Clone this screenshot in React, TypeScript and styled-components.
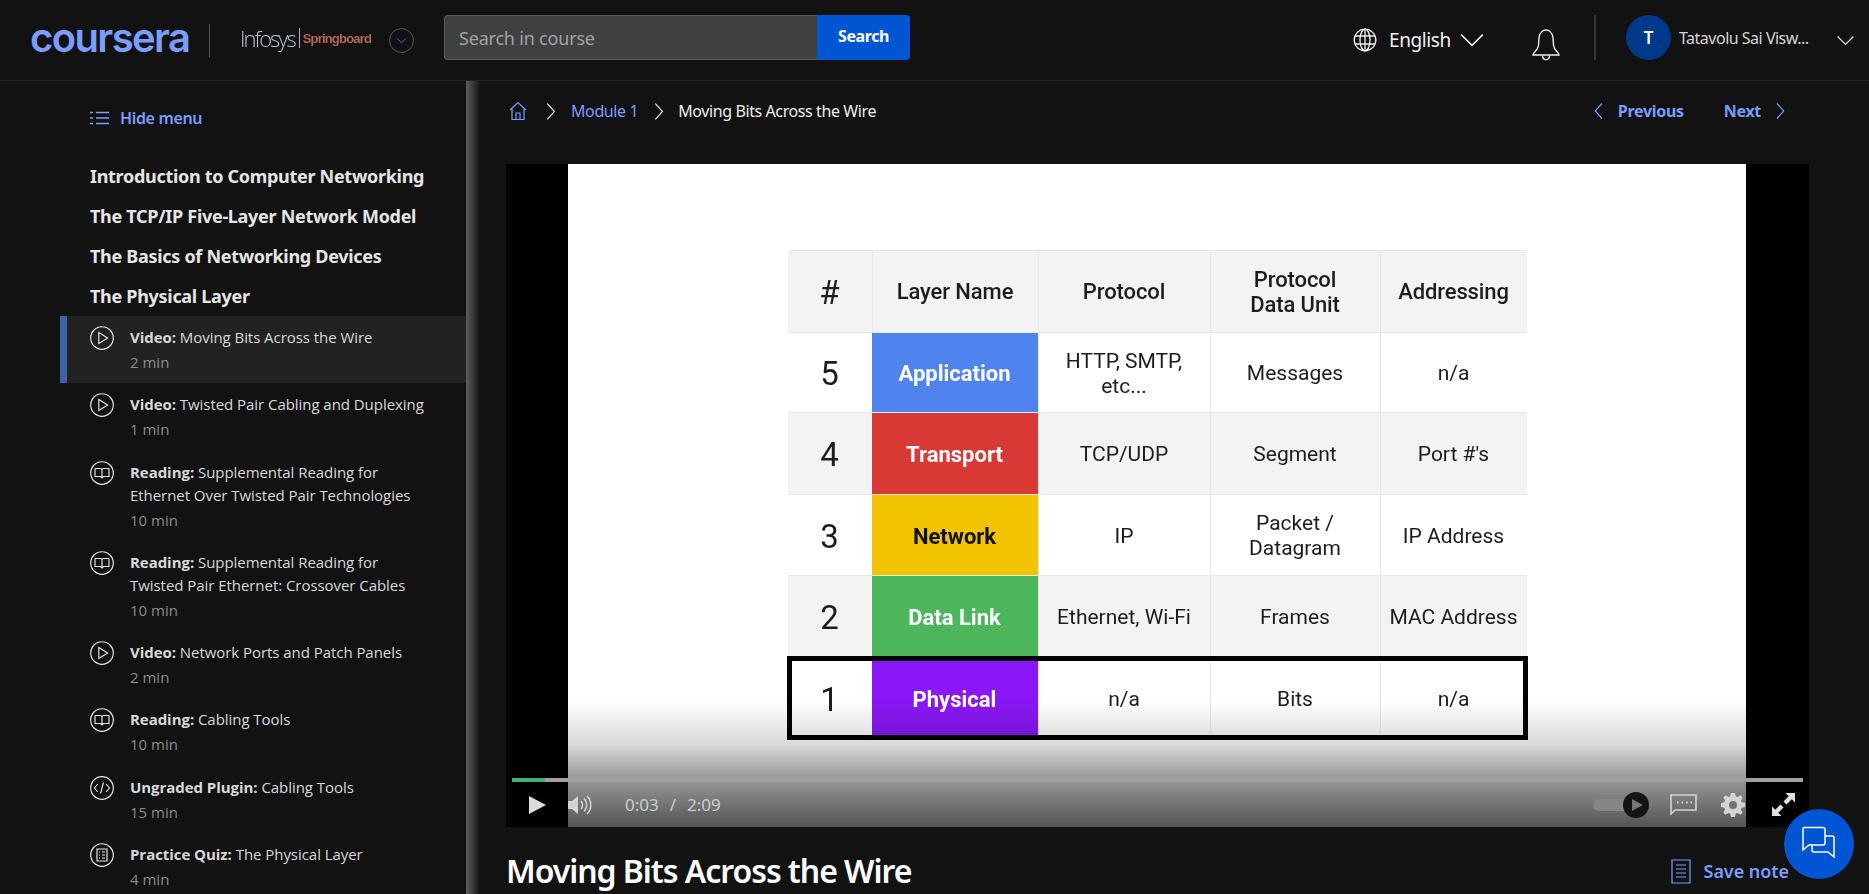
import styled, { createGlobalStyle } from "styled-components";

const GlobalStyle = createGlobalStyle`
    html, body {
        margin: 0;
        height: 100%;
        overflow: hidden;
        background: #121212;
        font-family: "Noto Sans", "Open Sans", sans-serif;
    }
    * {
        box-sizing: border-box;
    }
`

const BLUE = '#7b9dff'

const Chevron = ({dir = 'down', size = 22, color = '#e6e6e6'}: { dir?: string, size?: number, color?: string }) => {
    const paths: Record<string, string> = {
        down: 'M2 7 L12 17 L22 7',
        left: 'M16 2 L7 12 L16 22',
        right: 'M8 2 L17 12 L8 22',
    }
    return (
        <svg width={size} height={size} viewBox="0 0 24 24" fill="none" stroke={color} strokeWidth="1.5">
            <path d={paths[dir]}/>
        </svg>
    )
}

const Globe = () => (
    <svg width="24" height="24" viewBox="0 0 24 24" fill="none" stroke="#eee" strokeWidth="1.3">
        <circle cx="12" cy="12" r="10.8"/>
        <ellipse cx="12" cy="12" rx="5" ry="10.8"/>
        <path d="M12 1.2 V22.8 M1.6 8 H22.4 M1.6 16 H22.4"/>
    </svg>
)

const Bell = () => (
    <svg width="30" height="34" viewBox="0 0 30 34" fill="none" stroke="#eee" strokeWidth="1.4">
        <path d="M2 27 C2 24 7 23 7.5 17 L8 10 C8.5 5 11.5 2 15 2 C18.5 2 21.5 5 22 10 L22.5 17 C23 23 28 24 28 27 Z"/>
        <path d="M11.5 27.5 C11.5 33 18.5 33 18.5 27.5"/>
    </svg>
)

const Home = () => (
    <svg width="18" height="20" viewBox="0 0 18 20" fill="none" stroke={BLUE} strokeWidth="1.2">
        <path d="M1 9 L9 1.5 L17 9 M3 8 V18.5 H15 V8 M7 18.5 V12 H11 V18.5"/>
    </svg>
)

const ListIcon = () => (
    <svg width="20" height="14" viewBox="0 0 20 14" fill="none" stroke={BLUE} strokeWidth="1.6">
        <path d="M0 1.5 H3 M6 1.5 H19 M0 7 H3 M6 7 H19 M0 12.5 H3 M6 12.5 H19"/>
    </svg>
)

const ItemIcon = ({kind}: { kind: string }) => (
    <svg width="24" height="24" viewBox="0 0 24 24" fill="none" stroke="#e8e8e8" strokeWidth="1.15">
        <circle cx="12" cy="12" r="11.3"/>
        {kind === 'video' && <path d="M8.8 6.6 L17.6 12 L8.8 17.4 Z"/>}
        {kind === 'reading' && <path d="M5 7.5 H10.5 C11.3 7.5 12 8 12 9 V16.5 M19 7.5 H13.5 C12.7 7.5 12 8 12 9 M5 7.5 V15.5 H10.5 L12 17 L13.5 15.5 H19 V7.5"/>}
        {kind === 'plugin' && <path d="M7.8 8 L4.5 12 L7.8 16 M16.2 8 L19.5 12 L16.2 16 M13.4 6.5 L10.6 17.5"/>}
        {kind === 'quiz' && <path d="M7 6 H17 V18 H7 Z M9 9 H10 M12 9 H15 M9 12 H10 M12 12 H15 M9 15 H10 M12 15 H15"/>}
    </svg>
)

const Speaker = () => (
    <svg width="26" height="22" viewBox="0 0 26 22" fill="none" stroke="#d4d4d4" strokeWidth="1.5">
        <path d="M0 7 H4 L10 2 V20 L4 15 H0 Z" fill="#d4d4d4" stroke="none"/>
        <path d="M13 7 C15 9 15 13 13 15 M16 4.5 C19.5 8 19.5 14 16 17.5 M19 2 C24 7 24 15 19 20"/>
    </svg>
)

const Captions = () => (
    <svg width="27" height="21" viewBox="0 0 27 21" fill="none" stroke="#d4d4d4" strokeWidth="1.6">
        <path d="M1 1 H26 V16 H5 L1 20 Z"/>
        <path d="M7 8.5 H8.6 M11.5 8.5 H13.1 M16 8.5 H17.6 M20.5 8.5 H22" strokeWidth="2"/>
    </svg>
)

const Gear = () => (
    <svg width="24" height="24" viewBox="0 0 24 24">
        <path fill="#d4d4d4" fillRule="evenodd"
              d="M10 0 H14 L14.7 3.3 L16.6 4.1 L19.5 2.3 L21.7 4.5 L19.9 7.4 L20.7 9.3 L24 10 V14 L20.7 14.7 L19.9 16.6 L21.7 19.5 L19.5 21.7 L16.6 19.9 L14.7 20.7 L14 24 H10 L9.3 20.7 L7.4 19.9 L4.5 21.7 L2.3 19.5 L4.1 16.6 L3.3 14.7 L0 14 V10 L3.3 9.3 L4.1 7.4 L2.3 4.5 L4.5 2.3 L7.4 4.1 L9.3 3.3 Z M12 8 A4 4 0 1 0 12 16 A4 4 0 1 0 12 8 Z"/>
    </svg>
)

const Expand = () => (
    <svg width="23" height="23" viewBox="0 0 23 23" fill="#e0e0e0">
        <path d="M13.5 0 H23 V9.5 L19.8 6.3 L14.5 11.5 L11.5 8.5 L16.7 3.2 Z"/>
        <path d="M9.5 23 H0 V13.5 L3.2 16.7 L8.5 11.5 L11.5 14.5 L6.3 19.8 Z"/>
    </svg>
)

const Note = () => (
    <svg width="20" height="25" viewBox="0 0 20 25" fill="none" stroke={BLUE} strokeWidth="1.2">
        <path d="M1 1 H19 V24 H1 Z M5 6 H15 M5 10 H15 M5 14 H15 M5 18 H15"/>
    </svg>
)

const ChatIcon = () => (
    <svg width="36" height="36" viewBox="0 0 36 36" fill="none" stroke="#fff" strokeWidth="1.5">
        <path d="M3 1.5 H22 Q24 1.5 24 3.5 V17 Q24 19 22 19 H8 L2 24 V3 Q2 1.5 3 1.5 Z" fill="#0056d2"/>
        <path d="M11 19 V24 Q11 26 13 26 H27 L33 31 V12 Q33 10 31 10 H24" />
    </svg>
)

const sections = [
    'Introduction to Computer Networking',
    'The TCP/IP Five-Layer Network Model',
    'The Basics of Networking Devices',
    'The Physical Layer',
]

const items = [
    {kind: 'video', label: 'Video:', title: 'Moving Bits Across the Wire', time: '2 min', active: true},
    {kind: 'video', label: 'Video:', title: 'Twisted Pair Cabling and Duplexing', time: '1 min'},
    {kind: 'reading', label: 'Reading:', title: 'Supplemental Reading for Ethernet Over Twisted Pair Technologies', time: '10 min'},
    {kind: 'reading', label: 'Reading:', title: 'Supplemental Reading for Twisted Pair Ethernet: Crossover Cables', time: '10 min'},
    {kind: 'video', label: 'Video:', title: 'Network Ports and Patch Panels', time: '2 min'},
    {kind: 'reading', label: 'Reading:', title: 'Cabling Tools', time: '10 min'},
    {kind: 'plugin', label: 'Ungraded Plugin:', title: 'Cabling Tools', time: '15 min'},
    {kind: 'quiz', label: 'Practice Quiz:', title: 'The Physical Layer', time: '4 min'},
]

const rows = [
    {num: '5', name: 'Application', color: '#4f84ee', protocol: 'HTTP, SMTP,\netc...', unit: 'Messages', address: 'n/a'},
    {num: '4', name: 'Transport', color: '#d83934', protocol: 'TCP/UDP', unit: 'Segment', address: "Port #'s"},
    {num: '3', name: 'Network', color: '#f2c300', dark: true, protocol: 'IP', unit: 'Packet /\nDatagram', address: 'IP Address'},
    {num: '2', name: 'Data Link', color: '#4db65a', protocol: 'Ethernet, Wi-Fi', unit: 'Frames', address: 'MAC Address'},
    {num: '1', name: 'Physical', color: '#8a17f5', protocol: 'n/a', unit: 'Bits', address: 'n/a', boxed: true},
]

export default function App() {
    return (
        <Page>
            <GlobalStyle/>
            <Header>
                <Logo>coursera</Logo>
                <LogoDivider/>
                <Partner>
                    <PartnerName>Infosys</PartnerName>
                    <PartnerBar/>
                    <PartnerSub>Springboard</PartnerSub>
                </Partner>
                <RoundToggle><Chevron size={11} color={BLUE}/></RoundToggle>
                <SearchBox>
                    <SearchInput>Search in course</SearchInput>
                    <SearchButton>Search</SearchButton>
                </SearchBox>
                <HeaderRight>
                    <Globe/>
                    <Language>English</Language>
                    <Chevron size={26}/>
                    <BellWrap><Bell/></BellWrap>
                    <HeaderDivider/>
                    <Avatar>T</Avatar>
                    <UserName>Tatavolu Sai Visw...</UserName>
                    <Chevron size={19}/>
                </HeaderRight>
            </Header>
            <Body>
                <Sidebar>
                    <HideMenu><ListIcon/>Hide menu</HideMenu>
                    {sections.map(s => <SectionTitle key={s}>{s}</SectionTitle>)}
                    {items.map(item => (
                        <Item key={item.label + item.title} $active={item.active}>
                            <ItemIcon kind={item.kind}/>
                            <ItemText>
                                <ItemTitle><b>{item.label}</b> {item.title}</ItemTitle>
                                <ItemTime>{item.time}</ItemTime>
                            </ItemText>
                        </Item>
                    ))}
                </Sidebar>
                <Main>
                    <TopRow>
                        <Crumbs>
                            <HomeLink><Home/></HomeLink>
                            <Chevron dir="right" size={19}/>
                            <CrumbLink>Module 1</CrumbLink>
                            <Chevron dir="right" size={19}/>
                            <CrumbCurrent>Moving Bits Across the Wire</CrumbCurrent>
                        </Crumbs>
                        <Pager>
                            <PagerLink><Chevron dir="left" size={18} color={BLUE}/>Previous</PagerLink>
                            <PagerLink>Next<Chevron dir="right" size={18} color={BLUE}/></PagerLink>
                        </Pager>
                    </TopRow>
                    <Video>
                        <Slide>
                            <LayerTable>
                                <TableRow $shade>
                                    <NumberCell>#</NumberCell>
                                    <HeadCell>Layer Name</HeadCell>
                                    <HeadCell>Protocol</HeadCell>
                                    <HeadCell>{'Protocol\nData Unit'}</HeadCell>
                                    <HeadCell>Addressing</HeadCell>
                                </TableRow>
                                {rows.map((row, i) => (
                                    <TableRow key={row.num} $shade={i % 2 === 1} $boxed={row.boxed}>
                                        <NumberCell>{row.num}</NumberCell>
                                        <NameCell $bg={row.color} $dark={row.dark}>{row.name}</NameCell>
                                        <Cell>{row.protocol}</Cell>
                                        <Cell>{row.unit}</Cell>
                                        <Cell>{row.address}</Cell>
                                    </TableRow>
                                ))}
                            </LayerTable>
                        </Slide>
                        <Shade/>
                        <Progress><ProgressDone style={{width: `${(3 / 129) * 100 + 0.25}%`}}/></Progress>
                        <Controls>
                            <PlayButton/>
                            <SpeakerWrap><Speaker/></SpeakerWrap>
                            <TimeText>0:03<TimeSlash>/</TimeSlash>2:09</TimeText>
                            <ControlsRight>
                                <SpeedSlider><SpeedKnob/></SpeedSlider>
                                <Captions/>
                                <Gear/>
                                <ExpandWrap><Expand/></ExpandWrap>
                            </ControlsRight>
                        </Controls>
                    </Video>
                    <TitleRow>
                        <VideoTitle>Moving Bits Across the Wire</VideoTitle>
                        <SaveNote><Note/>Save note</SaveNote>
                    </TitleRow>
                </Main>
            </Body>
            <ChatButton><ChatIcon/></ChatButton>
        </Page>
    );
}

const Page = styled.div`
    height: 100vh;
    overflow: hidden;
    background: #121212;
    color: #fff;
`

const Header = styled.header`
    height: 81px;
    display: flex;
    align-items: center;
    padding: 0 14px 0 30px;
    border-bottom: 1px solid #222;
`

const Logo = styled.div`
    width: 160px;
    margin-bottom: 4px;
    font-family: "Inter", sans-serif;
    font-size: 40px;
    font-weight: 600;
    letter-spacing: -1.6px;
    color: ${BLUE};
    line-height: 40px;
`

const LogoDivider = styled.div`
    width: 1px;
    height: 33px;
    margin: 0 30px 0 19px;
    background: #555;
`

const Partner = styled.div`
    width: 149px;
    margin-bottom: 4px;
    display: flex;
    align-items: center;
    filter: blur(0.4px);
`

const PartnerName = styled.span`
    font-family: "Open Sans", sans-serif;
    font-size: 22px;
    font-weight: 300;
    letter-spacing: -2px;
    color: #b9c3d6;
`

const PartnerBar = styled.span`
    width: 1px;
    height: 20px;
    margin: 0 3px 0 4px;
    background: #aaa;
`

const PartnerSub = styled.span`
    font-family: "Liberation Sans", sans-serif;
    font-size: 13px;
    font-weight: 700;
    letter-spacing: -0.8px;
    color: #b5655c;
`

const RoundToggle = styled.div`
    width: 25px;
    height: 25px;
    display: flex;
    align-items: center;
    justify-content: center;
    border: 1px solid #555;
    border-radius: 50%;
`

const SearchBox = styled.div`
    width: 466px;
    height: 45px;
    margin: 0 0 6px 30px;
    display: flex;
`

const SearchInput = styled.div`
    flex: 1;
    display: flex;
    align-items: center;
    padding: 1px 0 0 14px;
    background: #404040;
    border: 1px solid #5c5c5c;
    border-right: none;
    border-radius: 4px 0 0 4px;
    font-size: 18px;
    letter-spacing: -0.2px;
    color: #a2a2a2;
`

const SearchButton = styled.div`
    width: 93px;
    display: flex;
    align-items: center;
    justify-content: center;
    background: #0056d2;
    border-radius: 0 4px 4px 0;
    font-size: 16px;
    font-weight: 700;
    letter-spacing: -0.4px;
    padding-bottom: 2px;
`

const HeaderRight = styled.div`
    margin-left: auto;
    display: flex;
    align-items: center;
`

const Language = styled.span`
    width: 70px;
    margin-left: 12px;
    font-size: 19px;
    letter-spacing: -0.4px;
    color: #f0f0f0;
`

const BellWrap = styled.div`
    margin: 10px 0 0 46px;
    display: flex;
`

const HeaderDivider = styled.div`
    width: 2px;
    height: 45px;
    margin: 0 30px 5px 33px;
    background: #333;
`

const Avatar = styled.div`
    width: 45px;
    height: 45px;
    margin-bottom: 5px;
    display: flex;
    align-items: center;
    justify-content: center;
    border-radius: 50%;
    background: #00388a;
    font-size: 17px;
    font-weight: 600;
`

const UserName = styled.div`
    width: 157px;
    margin-left: 8px;
    padding-bottom: 4px;
    font-size: 16px;
    letter-spacing: -0.5px;
    color: #d6d6d6;
    white-space: nowrap;
`

const Body = styled.div`
    display: flex;
    height: calc(100vh - 81px);
`

const Sidebar = styled.aside`
    width: 466px;
    flex-shrink: 0;
    padding: 19px 0 0 60px;
`

const HideMenu = styled.div`
    height: 36px;
    margin-left: 30px;
    margin-bottom: 20px;
    display: flex;
    align-items: center;
    gap: 10px;
    font-size: 16px;
    font-weight: 600;
    letter-spacing: -0.35px;
    color: ${BLUE};
`

const SectionTitle = styled.div`
    height: 40px;
    margin-left: 30px;
    display: flex;
    align-items: center;
    font-size: 18px;
    font-weight: 700;
    letter-spacing: -0.3px;
    color: #e6e6e6;
`

const Item = styled.div<{ $active?: boolean }>`
    display: flex;
    gap: 16px;
    padding: 10px 36px 9.3px 23px;
    border-left: 7px solid ${props => props.$active ? '#3c64a6' : 'transparent'};
    background: ${props => props.$active ? '#222' : 'transparent'};
`

const ItemText = styled.div`
    flex: 1;
`

const ItemTitle = styled.div`
    font-family: "Open Sans", sans-serif;
    font-size: 15px;
    line-height: 23px;
    letter-spacing: -0.05px;
    color: #d9d9d9;

    b {
        font-weight: 700;
    }
`

const ItemTime = styled.div`
    padding-top: 1px;
    font-family: "Open Sans", sans-serif;
    font-size: 15px;
    line-height: 24px;
    color: #8a8a8a;
`

const Main = styled.main`
    flex: 1;
    min-width: 0;
    padding: 0 60px 0 40px;
    background: linear-gradient(to right, #5e5e5e, #121212) no-repeat 0 0 / 14px 100%;
`

const TopRow = styled.div`
    height: 83px;
    padding: 0 20px 23px 3px;
    display: flex;
    align-items: center;
    justify-content: space-between;
`

const Crumbs = styled.div`
    display: flex;
    align-items: center;
    gap: 11px;
    font-size: 16px;
    letter-spacing: -0.4px;
`

const HomeLink = styled.span`
    display: flex;
    margin-right: 3px;
`

const CrumbLink = styled.span`
    color: ${BLUE};
`

const CrumbCurrent = styled.span`
    margin-left: -1px;
    color: #eee;
`

const Pager = styled.div`
    display: flex;
    gap: 40px;
`

const PagerLink = styled.div`
    display: flex;
    align-items: center;
    gap: 10px;
    font-size: 16px;
    font-weight: 700;
    letter-spacing: -0.3px;
    color: ${BLUE};
`

const Video = styled.div`
    position: relative;
    width: 1303px;
    height: 663px;
    padding-right: 1px;
    background: #000;
    display: flex;
    justify-content: center;
    overflow: hidden;
`

const Slide = styled.div`
    width: 1178px;
    height: 100%;
    padding-top: 86px;
    background: #fff;
    display: flex;
    justify-content: center;
`

const LayerTable = styled.div`
    width: 739px;
    height: 489px;
    display: grid;
    grid-template-rows: 82px 80px 82px 81px 82px 82px;
    font-family: "Roboto", sans-serif;
    color: #1c1c1c;
    filter: blur(0.35px);
`

const TableRow = styled.div<{ $shade?: boolean, $boxed?: boolean }>`
    position: relative;
    display: grid;
    grid-template-columns: 84px 166px 172px 170px 147px;
    background: ${props => props.$shade ? '#f3f3f3' : '#fff'};
    border-top: 1px solid #e8e8e8;
    ${props => props.$boxed && 'outline: 5px solid #000; outline-offset: -4px; z-index: 1;'}
`

const Cell = styled.div`
    display: flex;
    align-items: center;
    justify-content: center;
    padding: 2px 2px 0;
    text-align: center;
    white-space: pre-line;
    border-left: 1px solid #e8e8e8;
    font-size: 21px;
    line-height: 25px;
`

const HeadCell = styled(Cell)`
    padding-top: 0;
    font-size: 22px;
    font-weight: 500;
    letter-spacing: -0.1px;
`

const NumberCell = styled(Cell)`
    font-size: 33px;
    border-left: none;
`

const NameCell = styled(Cell)<{ $bg: string, $dark?: boolean }>`
    background: ${props => props.$bg};
    color: ${props => props.$dark ? '#111' : '#fff'};
    font-size: 22px;
    font-weight: 700;
    border-left: none;
`

const Shade = styled.div`
    position: absolute;
    left: 0;
    right: 0;
    bottom: 0;
    height: 127px;
    background: linear-gradient(to bottom, rgba(0, 0, 0, 0), rgba(0, 0, 0, 0.15) 35%, rgba(0, 0, 0, 0.4) 61%, rgba(0, 0, 0, 0.67));
`

const Progress = styled.div`
    position: absolute;
    left: 6px;
    right: 6px;
    top: 614px;
    height: 4px;
    background: #a0a0a0;
`

const ProgressDone = styled.div`
    height: 100%;
    background: #3fb36f;
`

const Controls = styled.div`
    position: absolute;
    left: 0;
    right: 0;
    bottom: 0;
    height: 48px;
    display: flex;
    align-items: center;
    padding: 3px 14px 0 23px;
`

const PlayButton = styled.div`
    width: 0;
    height: 0;
    border-style: solid;
    border-width: 9px 0 9px 17px;
    border-color: transparent transparent transparent #dcdcdc;
`

const SpeakerWrap = styled.div`
    display: flex;
    margin-left: 22px;
`

const TimeText = styled.div`
    margin-left: 31px;
    font-size: 17px;
    color: #ccc;
`

const TimeSlash = styled.span`
    margin: 0 11px;
`

const ControlsRight = styled.div`
    margin-left: auto;
    display: flex;
    align-items: center;
    gap: 24px;
`

const ExpandWrap = styled.div`
    display: flex;
    margin-left: 3px;
`

const SpeedSlider = styled.div`
    position: relative;
    width: 47px;
    height: 12px;
    margin-right: 6px;
    border-radius: 6px;
    background: #858585;
`

const SpeedKnob = styled.div`
    position: absolute;
    right: -9px;
    top: -7px;
    width: 26px;
    height: 26px;
    border-radius: 50%;
    background: #141414;

    &::after {
        content: '';
        position: absolute;
        left: 9px;
        top: 7px;
        border-style: solid;
        border-width: 6px 0 6px 11px;
        border-color: transparent transparent transparent #777;
    }
`

const TitleRow = styled.div`
    width: 1303px;
    display: flex;
    align-items: center;
    justify-content: space-between;
    padding: 21px 20px 0 0;
`

const VideoTitle = styled.h1`
    margin: 0;
    font-size: 32px;
    font-weight: 600;
    letter-spacing: -1.05px;
    line-height: 46px;
    color: #fff;
`

const SaveNote = styled.div`
    display: flex;
    align-items: center;
    gap: 13px;
    font-size: 18px;
    font-weight: 600;
    letter-spacing: -0.05px;
    color: ${BLUE};
`

const ChatButton = styled.div`
    position: fixed;
    left: 1784px;
    top: 809px;
    width: 70px;
    height: 70px;
    display: flex;
    align-items: center;
    justify-content: center;
    border-radius: 50%;
    background: #0056d2;
`
